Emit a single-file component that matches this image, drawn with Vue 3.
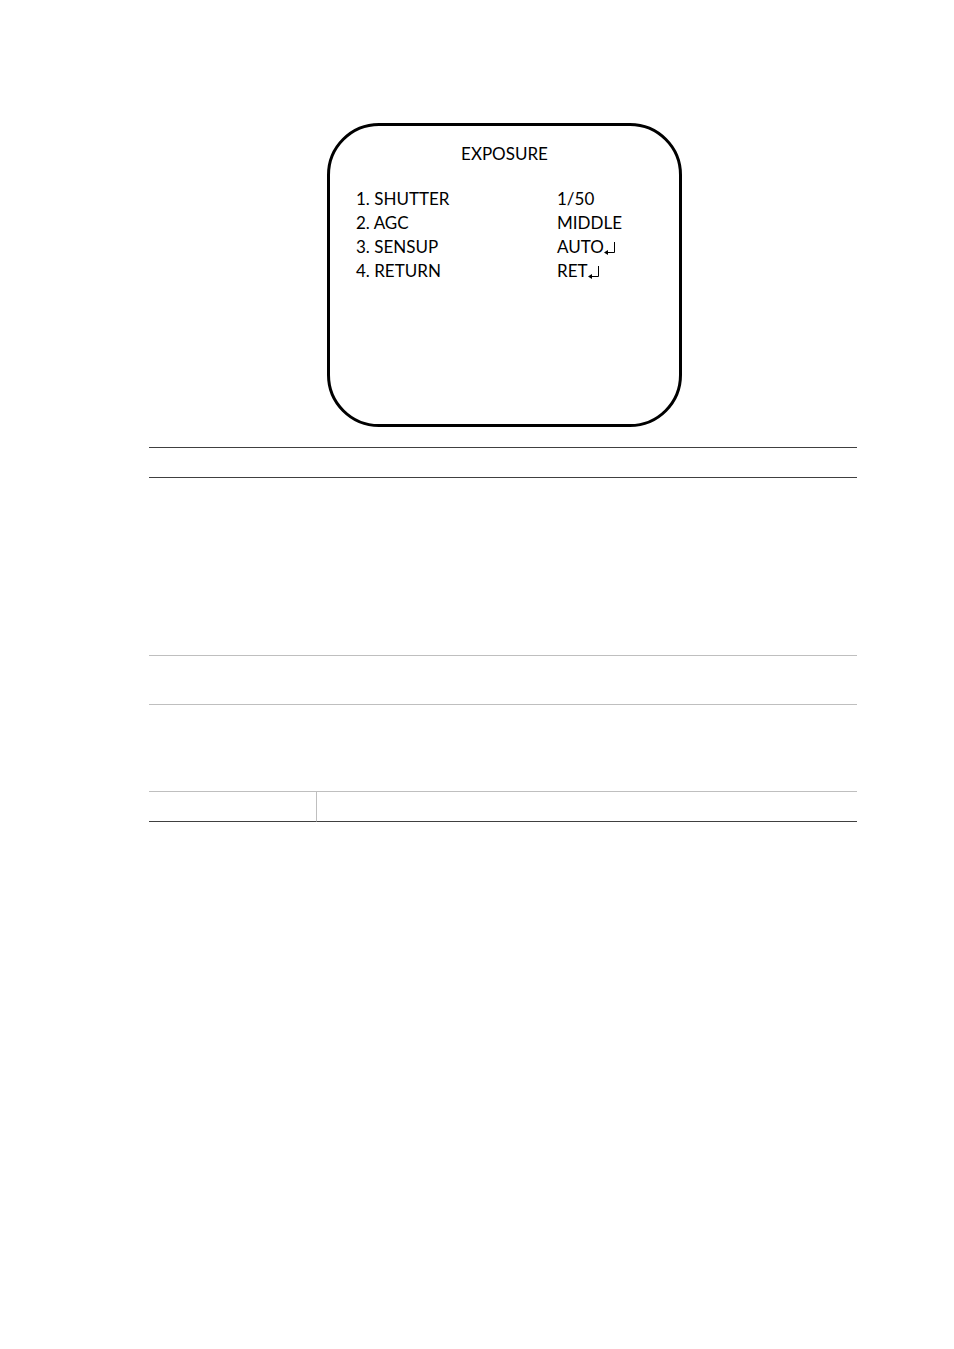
<template>
  <main class="page">
    <section class="screen">
      <h1 class="screen-title">EXPOSURE</h1>
      <table class="menu">
        <tbody>
          <tr v-for="(item, index) in menuItems" :key="item.name">
            <th scope="row">{{ index + 1 }}. {{ item.name }}</th>
            <td>
              <span class="value">
                {{ item.value }}
                <svg v-if="item.enter" class="enter" viewBox="0 0 12 16" role="img" aria-label="Enter">
                  <path d="M10.5 3V13.5H2" fill="none" stroke="currentColor" />
                  <path d="M0 13.5L4 11V16Z" fill="currentColor" />
                </svg>
              </span>
            </td>
          </tr>
        </tbody>
      </table>
    </section>

    <table class="details">
      <thead>
        <tr class="row-short">
          <td class="name"></td>
          <td></td>
        </tr>
      </thead>
      <tbody>
        <tr v-for="row in detailRows" :key="row.id" :class="row.size">
          <td class="name"></td>
          <td></td>
        </tr>
      </tbody>
    </table>
  </main>
</template>

<script setup>
const menuItems = [
  { name: 'SHUTTER', value: '1/50' },
  { name: 'AGC', value: 'MIDDLE' },
  { name: 'SENSUP', value: 'AUTO', enter: true },
  { name: 'RETURN', value: 'RET', enter: true }
]

const detailRows = [
  { id: 1, size: 'row-tall' },
  { id: 2, size: 'row-medium' },
  { id: 3, size: 'row-large' },
  { id: 4, size: 'row-short' }
]
</script>

<style>
body {
  margin: 0;
  background: #fff;
}
</style>

<style scoped>
.page {
  padding: 123px 97px 60px 149px;
  font-family: Lato, "Noto Sans", sans-serif;
  font-size: 17px;
  line-height: 24px;
  color: #000;
}

.screen {
  box-sizing: border-box;
  max-width: 355px;
  min-height: 304px;
  margin: 0 0 20px 178px;
  padding: 16px 26px;
  border: 3px solid #000;
  border-radius: 52px;
}

.screen-title {
  margin: 0 0 21px;
  font-size: 17px;
  font-weight: 400;
  text-align: center;
}

.menu {
  width: 100%;
  border-spacing: 0;
  table-layout: fixed;
}

.menu th,
.menu td {
  padding: 0;
  font-weight: 400;
  text-align: left;
}

.menu th {
  width: 201px;
}

.value {
  display: flex;
  align-items: center;
}

.enter {
  width: 12px;
  height: 16px;
}

.details {
  width: 100%;
  border-spacing: 0;
  table-layout: fixed;
  border-top: 1px solid #404040;
}

.details td {
  box-sizing: border-box;
  padding: 0;
  border-bottom: 1px solid #bfbfbf;
}

.details .name {
  width: 168px;
}

.details thead td,
.details tbody tr:last-child td {
  border-bottom-color: #404040;
}

.details tbody tr:last-child .name {
  border-right: 1px solid #bfbfbf;
}

.row-short td {
  height: 30px;
}

.row-medium td {
  height: 49px;
}

.row-large td {
  height: 87px;
}

.row-tall td {
  height: 178px;
}
</style>
